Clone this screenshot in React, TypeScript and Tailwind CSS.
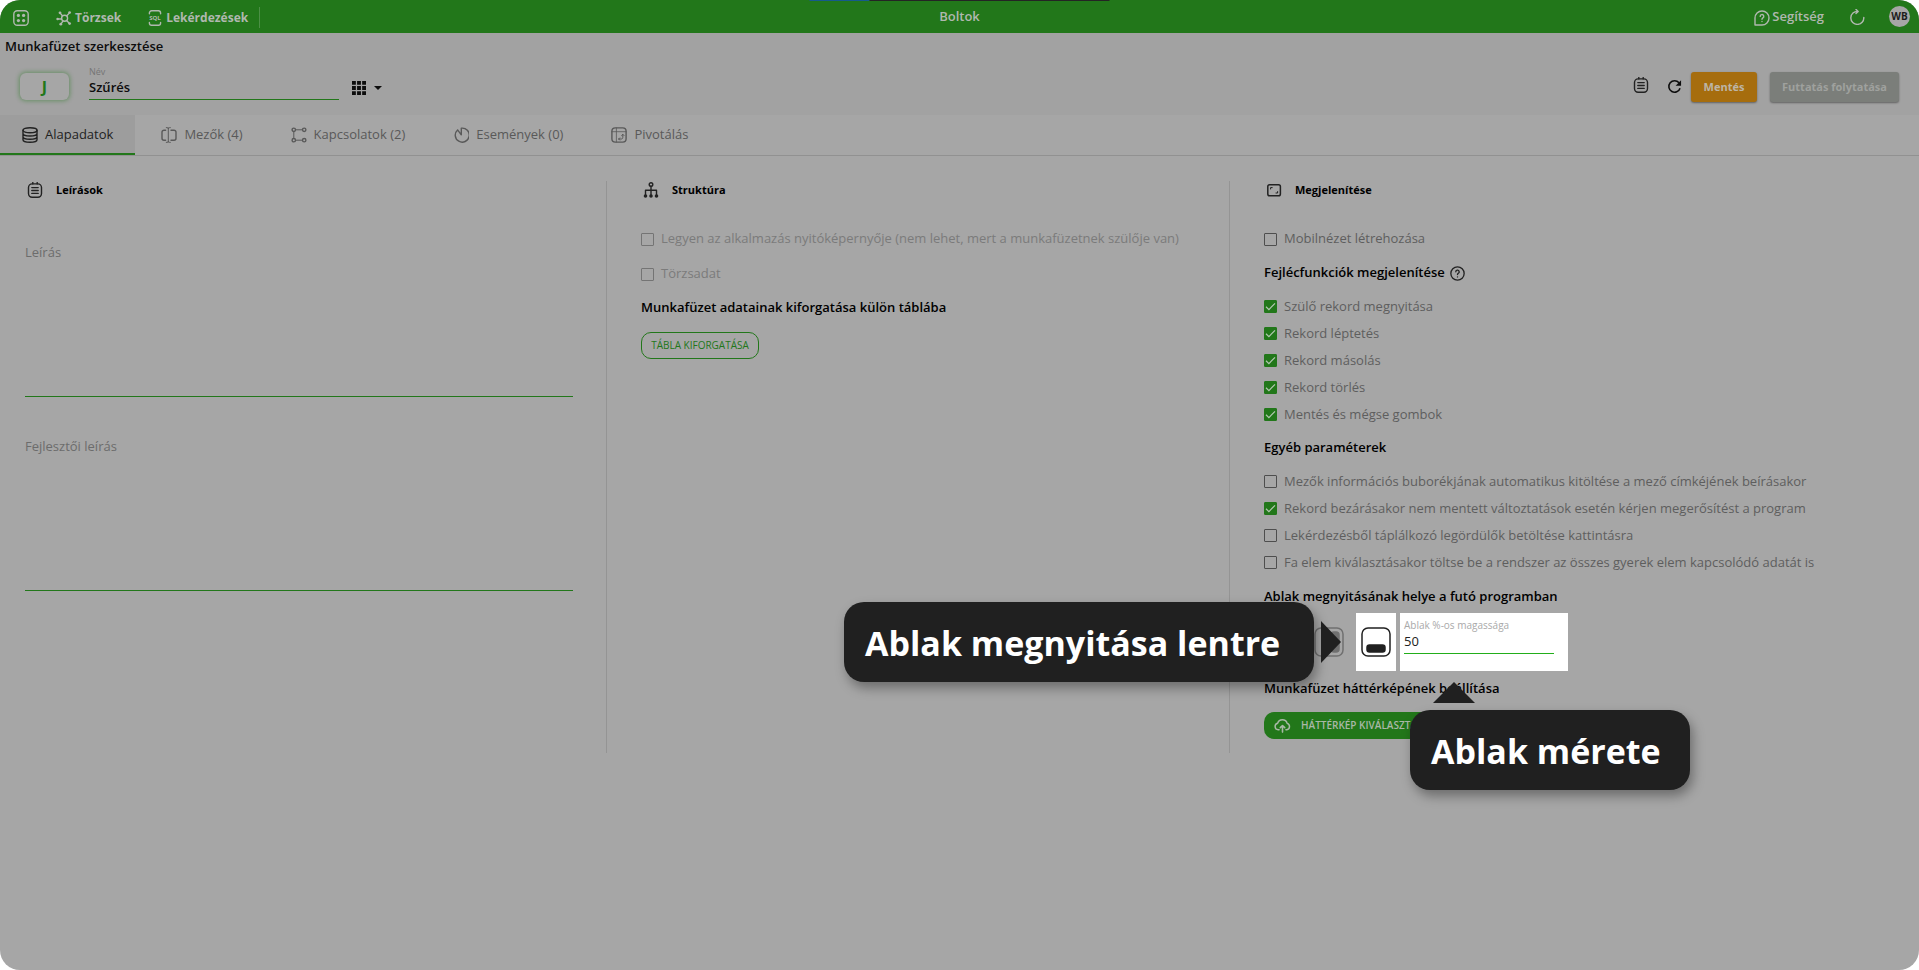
import { useState } from "react";
import type { ReactNode } from "react";

type IconProps = { className?: string };

function Svg({ className = "", children }: { className?: string; children: ReactNode }) {
    return (
        <svg className={`shrink-0 ${className}`} viewBox="0 0 16 16" fill="none" stroke="currentColor"
            strokeWidth={1.4} strokeLinecap="round" strokeLinejoin="round" aria-hidden="true">
            {children}
        </svg>
    );
}

/* ---------- Icons ---------- */

const AppsIcon = ({ className }: IconProps) => (
    <Svg className={className}>
        <rect x="0.8" y="0.8" width="14.4" height="14.4" rx="3.5" />
        <g fill="currentColor" stroke="none">
            <circle cx="5.4" cy="5.4" r="1.6" />
            <circle cx="10.6" cy="5.4" r="1.6" />
            <circle cx="5.4" cy="10.6" r="1.6" />
            <circle cx="10.6" cy="10.6" r="1.6" />
        </g>
    </Svg>
);

const HubIcon = ({ className }: IconProps) => (
    <Svg className={className}>
        <circle cx="8.6" cy="8.2" r="3" />
        <path d="M6.4 5.8 4.6 3.6M10.8 5.8l2-2.2M5.6 9H2.2M10.6 10.6l2.4 2.4M7 11l-1.6 2.4" />
        <g fill="currentColor" stroke="none">
            <circle cx="4" cy="2.8" r="1.4" />
            <circle cx="13.6" cy="2.6" r="1.4" />
            <circle cx="1.6" cy="9" r="1.3" />
            <circle cx="13.6" cy="13.6" r="1.4" />
            <circle cx="4.8" cy="14.2" r="1.4" />
        </g>
    </Svg>
);

const SqlIcon = ({ className }: IconProps) => (
    <Svg className={className}>
        <path d="M2.4 3.8V3a2.2 2.2 0 0 1 2.2-2.2h6.8A2.2 2.2 0 0 1 13.6 3v.8M2.4 12.4v.6a2.2 2.2 0 0 0 2.2 2.2h6.8a2.2 2.2 0 0 0 2.2-2.2v-.6" />
        <text x="8" y="10.4" textAnchor="middle" fontSize="6" fontWeight="700" fill="currentColor" stroke="none">SQL</text>
    </Svg>
);

const HelpBubbleIcon = ({ className }: IconProps) => (
    <Svg className={className}>
        <path d="M1 15V8a7 7 0 1 1 7 7H1Z" />
        <path d="M6.2 6.4a1.8 1.8 0 1 1 2.7 1.5c-.6.4-.9.7-.9 1.4M8 11.5v.1" />
    </Svg>
);

const HelpIcon = ({ className }: IconProps) => (
    <Svg className={className}>
        <circle cx="8" cy="8" r="7.1" />
        <path d="M6.2 6.2a1.8 1.8 0 1 1 2.7 1.5c-.6.4-.9.7-.9 1.4M8 11.5v.1" />
    </Svg>
);

const ReloadIcon = ({ className }: IconProps) => (
    <Svg className={className}>
        <path d="M8.8 2.4a6.5 6.5 0 1 0 6 6M7 .4l2.2 2L7 4.6" />
    </Svg>
);

const RefreshIcon = ({ className }: IconProps) => (
    <Svg className={className}>
        <path strokeWidth={1.7} strokeLinecap="butt" d="M12.8 4.1A6.1 6.1 0 1 0 13.9 9.8" />
        <path fill="currentColor" stroke="none" d="M15 1.4v5.8H9.2z" />
    </Svg>
);

const NotesIcon = ({ className }: IconProps) => (
    <Svg className={className}>
        <rect x="1.5" y="1.9" width="13" height="13.3" rx="3.6" />
        <path d="M5.8.5v1.4M10.2.5v1.4M4.8 5.6h6.4M4.8 8.5h6.4M4.8 11.4h6.4" />
    </Svg>
);

const GridIcon = ({ className }: IconProps) => (
    <Svg className={className}>
        <path fill="currentColor" stroke="none"
            d="M0 0h4.4v4.4H0zM5.8 0h4.4v4.4H5.800zM11.6 0H16v4.4h-4.400zM0 5.800h4.400v4.400H0zM5.800 5.800h4.400v4.400H5.800zM11.600 5.800H16v4.400h-4.400zM0 11.600h4.400V16H0zM5.800 11.600h4.400V16H5.800zM11.600 11.600H16V16h-4.400z" />
    </Svg>
);

const DatabaseIcon = ({ className }: IconProps) => (
    <Svg className={className}>
        <ellipse cx="8" cy="3.3" rx="7" ry="2.5" />
        <path d="M1 3.3v9.4c0 1.4 3.1 2.5 7 2.5s7-1.1 7-2.5V3.3M1 6.5C1 7.9 4.1 9 8 9s7-1.1 7-2.5M1 9.7c0 1.4 3.1 2.5 7 2.5s7-1.1 7-2.5" />
    </Svg>
);

const FieldIcon = ({ className }: IconProps) => (
    <Svg className={className}>
        <path d="M4.6 3.2H3a2 2 0 0 0-2 2v6a2 2 0 0 0 2 2h1.6M10 3.2h3a2 2 0 0 1 2 2v6a2 2 0 0 1-2 2h-3" />
        <path strokeWidth={1} d="M7.3 1v14M5.3.6c1.2 0 2 .2 2 .9 0-.7.8-.9 2-.9M5.3 15.4c1.2 0 2-.2 2-.9 0 .7.8.9 2 .9" />
    </Svg>
);

const LinksIcon = ({ className }: IconProps) => (
    <Svg className={className}>
        <circle cx="2.8" cy="2.8" r="1.7" />
        <circle cx="13.2" cy="2.8" r="1.7" />
        <circle cx="2.8" cy="13.2" r="1.7" />
        <circle cx="13.2" cy="13.2" r="1.7" />
        <path strokeWidth={1} d="M4.8 2.8h6.4M2.8 4.8v6.4M4.8 13.2h6.4" />
    </Svg>
);

const EventIcon = ({ className }: IconProps) => (
    <Svg className={className}>
        <path d="M8.3 1.2v6.6L4.6 2.9A7 7 0 1 0 8.3 1.2Z" />
    </Svg>
);

const PivotIcon = ({ className }: IconProps) => (
    <Svg className={className}>
        <rect x="0.9" y="0.9" width="14.2" height="14.2" rx="3.4" />
        <path strokeWidth={0.8} d="M1 4.7h14M5.4 1v14" />
        <path strokeWidth={1} d="M7.6 12h2.6c1 0 1.6-.6 1.6-1.600V7.4M10.6 8.5l1.2-1.200L13 8.5M8.7 10.9 7.6 12l1.1 1.1" />
    </Svg>
);

const TreeIcon = ({ className }: IconProps) => (
    <Svg className={className}>
        <circle cx="8" cy="2.5" r="1.8" />
        <path d="M8 4.3V14M2.5 13V8.3h11V13" />
        <g fill="currentColor" stroke="none">
            <circle cx="2.5" cy="14" r="1.8" />
            <circle cx="8" cy="14" r="1.8" />
            <circle cx="13.5" cy="14" r="1.8" />
        </g>
    </Svg>
);

const ScreenIcon = ({ className }: IconProps) => (
    <Svg className={className}>
        <rect x="1.8" y="2.8" width="12.6" height="11" rx="1.8" strokeWidth={1.5} />
        <path strokeWidth={1} d="M4.6 7V5.6h1.600M11.6 9.6V11H10" />
    </Svg>
);

const CloudUploadIcon = ({ className }: IconProps) => (
    <Svg className={className}>
        <path strokeWidth={1.4} d="M4.8 12H3.9a3.1 3.1 0 0 1-.5-6.1A4.7 4.7 0 0 1 12.4 6a3.1 3.1 0 0 1-.3 6h-.9" />
        <path strokeWidth={1.5} d="M8 14.2V8.2M5.9 10 8 8l2.1 2" />
    </Svg>
);

/* ---------- Form parts ---------- */

type CheckProps = { label: string; checked?: boolean; disabled?: boolean; className?: string };

function Check({ label, checked = false, disabled = false, className = "h-5" }: CheckProps) {
    const tone = disabled ? "text-[#7b7b7b]" : "text-[#5e5e5e]";
    return (
        <label className={`flex items-center gap-[7px] text-[13px] whitespace-nowrap ${tone} ${className}`}>
            <span className="grid size-[13px] shrink-0">
                <input type="checkbox" defaultChecked={checked} disabled={disabled}
                    className="peer col-start-1 row-start-1 size-[13px] appearance-none rounded-[1px] border border-[#4e4e4e] checked:border-[#22771a] checked:bg-[#22771a] disabled:border-[#747474]" />
                <svg viewBox="0 0 13 13" fill="none" stroke="#b4c8b2" strokeWidth={1.2}
                    className="pointer-events-none invisible col-start-1 row-start-1 size-[13px] peer-checked:visible" aria-hidden="true">
                    <path d="M2 6.8 4.9 9.6 11 3.3" />
                </svg>
            </span>
            {label}
        </label>
    );
}

function ColumnTitle({ icon, children }: { icon: ReactNode; children: ReactNode }) {
    return (
        <h2 className="flex h-[18px] items-center gap-[13px] pl-[2px] text-[11px] font-bold text-black">
            {icon}
            {children}
        </h2>
    );
}

function SubTitle({ className, children }: { className: string; children: ReactNode }) {
    return (
        <h3 className={`flex h-5 items-center gap-[5px] text-[13px] font-semibold whitespace-nowrap text-black ${className}`}>
            {children}
        </h3>
    );
}

function Description({ id, label, className }: { id: string; label: string; className: string }) {
    return (
        <div className={className}>
            <label htmlFor={id} className="block text-[13px] leading-5 text-[#6c6c6c]">{label}</label>
            <textarea id={id} className="block h-[135px] w-full resize-none border-b border-[#22771a] bg-transparent text-[13px] outline-none" />
        </div>
    );
}

const tabs = [
    { name: "Alapadatok", icon: DatabaseIcon },
    { name: "Mezők (4)", icon: FieldIcon },
    { name: "Kapcsolatok (2)", icon: LinksIcon },
    { name: "Események (0)", icon: EventIcon },
    { name: "Pivotálás", icon: PivotIcon },
];

const headerFunctions = [
    "Szülő rekord megnyitása",
    "Rekord léptetés",
    "Rekord másolás",
    "Rekord törlés",
    "Mentés és mégse gombok",
];

const otherParams = [
    { label: "Mezők információs buborékjának automatikus kitöltése a mező címkéjének beírásakor", checked: false },
    { label: "Rekord bezárásakor nem mentett változtatások esetén kérjen megerősítést a program", checked: true },
    { label: "Lekérdezésből táplálkozó legördülők betöltése kattintásra", checked: false },
    { label: "Fa elem kiválasztásakor töltse be a rendszer az összes gyerek elem kapcsolódó adatát is", checked: false },
];

/* ---------- Sections ---------- */

function TopBar() {
    return (
        <header className="relative grid h-[33px] grid-cols-3 items-center bg-[#22771a] text-[13px] font-semibold text-[#b0b8af]">
            {/* Browser loading strip */}
            <div className="absolute top-0 left-1/2 flex h-px w-[301px] -translate-x-1/2">
                <span className="w-1/5 bg-[#165a8c]"></span>
                <span className="w-4/5 bg-[#242424]"></span>
            </div>

            <nav className="flex items-center pt-[2px] pl-[13px] text-xs font-bold whitespace-nowrap">
                <a href="#" aria-label="Alkalmazások"><AppsIcon className="size-4" /></a>
                <a href="#" className="ml-[27px] flex items-center gap-[3px]">
                    <HubIcon className="size-4" />
                    Törzsek
                </a>
                <a href="#" className="ml-[26px] flex items-center gap-[3px]">
                    <SqlIcon className="size-4" />
                    Lekérdezések
                </a>
                <span className="ml-[11px] h-[21px] w-px bg-[#4c8f46]"></span>
            </nav>

            <div className="text-center">Boltok</div>

            <div className="flex items-center justify-end pr-[9px]">
                <a href="#" className="flex items-center gap-[2px]">
                    <HelpBubbleIcon className="mt-[2px] size-4" />
                    Segítség
                </a>
                <button type="button" aria-label="Újratöltés" className="ml-[25px]"><ReloadIcon className="size-4" /></button>
                <button type="button" className="ml-6 size-[21px] rounded-full bg-[#a6a6a6] text-[10px] font-bold text-[#1c1c1c]">WB</button>
            </div>
        </header>
    );
}

function TitleBar() {
    return (
        <section className="bg-[#a2a2a2] pt-[3px] pb-[13px] text-[#0d0d0d]">
            <h1 className="pl-[5px] text-[13px] leading-5 font-semibold">Munkafüzet szerkesztése</h1>
            <div className="mt-2 flex h-[38px] items-end justify-between pr-5 pl-5">
                <div className="flex items-end pb-[2px]">
                    <button type="button" className="h-[27px] w-[49px] rounded-md bg-[#a6a6a6] text-base font-bold text-[#22771a] shadow-[0_0_4px_1px_rgba(34,119,26,0.45)]">J</button>
                    <div className="ml-5 w-[250px]">
                        <label htmlFor="name" className="block text-[9px] leading-[14px] text-[#757575]">Név</label>
                        <input id="name" defaultValue="Szűrés"
                            className="block h-[21px] w-full border-b border-[#22771a] bg-transparent pb-[5px] text-[13px] font-semibold outline-none" />
                    </div>
                    <button type="button" aria-label="Nézet" className="mb-[5px] ml-[13px] flex items-center gap-2">
                        <GridIcon className="size-[14px]" />
                        <svg viewBox="0 0 8 4" className="h-1 w-2" fill="currentColor" aria-hidden="true"><path d="M0 0h8L4 4z" /></svg>
                    </button>
                </div>
                <div className="flex items-end">
                    <button type="button" aria-label="Jegyzetek" className="mb-[9px] text-[#222]"><NotesIcon className="size-4" /></button>
                    <button type="button" aria-label="Frissítés" className="mb-2 ml-[18px]"><RefreshIcon className="size-[15px]" /></button>
                    <button type="button" className="ml-[9px] h-[30px] w-[66px] rounded-[3px] bg-[#a66d0e] text-[11px] font-bold text-[#bdb5a6] shadow-[0_1px_2px_rgba(0,0,0,0.4)]">Mentés</button>
                    <button type="button" disabled className="ml-[13px] h-[30px] w-[129px] rounded-[3px] bg-[#7b7e7a] text-[11px] font-bold text-[#9fa19e] shadow-[0_1px_2px_rgba(0,0,0,0.4)]">Futtatás folytatása</button>
                </div>
            </div>
        </section>
    );
}

function Callout({ className, children }: { className: string; children: ReactNode }) {
    return (
        <div className={`flex h-20 items-center rounded-[20px] bg-[#202020] pt-[2px] pl-[21px] text-[34px] font-bold whitespace-nowrap text-white shadow-[3px_6px_12px_rgba(0,0,0,0.35)] ${className}`}>
            {children}
        </div>
    );
}

function WindowPosition() {
    return (
        <div className="relative mt-[6px] flex h-[58px] items-center">
            <button type="button" aria-label="Megnyitás jobbra" className="ml-[50px] pr-3 text-[#707070]">
                <svg viewBox="0 0 30 30" className="size-[30px]" fill="none" stroke="currentColor" strokeWidth={1.5} aria-hidden="true">
                    <rect x="1" y="1" width="28" height="28" rx="6" />
                    <rect x="17" y="5" width="8" height="20" rx="3" fill="currentColor" />
                </svg>
            </button>
            <button type="button" aria-label="Megnyitás lentre" className="flex h-full w-10 items-center justify-center bg-white text-[#202020]">
                <svg viewBox="0 0 30 30" className="size-[30px]" fill="none" stroke="currentColor" strokeWidth={1.5} aria-hidden="true">
                    <rect x="1" y="1" width="28" height="28" rx="6" />
                    <rect x="6" y="18" width="18" height="7" rx="2.5" fill="currentColor" />
                </svg>
            </button>
            <div className="ml-1 h-full w-[168px] bg-white pt-[5px] pl-1">
                <label htmlFor="height" className="block text-[10px] leading-[14px] text-[#a9a9a9]">Ablak %-os magassága</label>
                <input id="height" defaultValue="50"
                    className="block h-[22px] w-[150px] border-b border-[#22ae1a] bg-transparent pb-1 text-[13px] text-[#222] outline-none" />
            </div>

            {/* Left callout, points at the bottom position button */}
            <div className="absolute top-[-11px] right-[calc(100%-77px)] z-10 flex items-center gap-[7px]">
                <Callout className="w-[470px]">Ablak megnyitása lentre</Callout>
                <svg viewBox="0 0 20 42" className="h-[42px] w-5" fill="#202020" aria-hidden="true"><path d="M0 0v42l20-21z" /></svg>
            </div>

            {/* Bottom callout, points at the height field */}
            <div className="absolute top-[69px] left-[146px] z-10 flex flex-col items-start gap-[7px]">
                <svg viewBox="0 0 42 21" className="ml-[23px] h-[21px] w-[42px]" fill="#202020" aria-hidden="true"><path d="M21 0 42 21H0z" /></svg>
                <Callout className="w-[280px]">Ablak mérete</Callout>
            </div>
        </div>
    );
}

export default function App() {
    const [active, setActive] = useState("Alapadatok");

    return (
        <div className="min-h-screen bg-white font-['Open_Sans','Noto_Sans',sans-serif]">
            <div className="min-h-screen overflow-hidden rounded-[20px] bg-[#a6a6a6]">
                <TopBar />
                <TitleBar />

                {/* Tabs */}
                <nav className="flex h-[41px] border-b border-[#919191]">
                    {tabs.map(({ name, icon: Icon }) => (
                        <button key={name} type="button" onClick={() => setActive(name)}
                            className={`flex h-10 items-center gap-[7px] border-b-2 pt-[2px] pr-[22px] text-[13px] whitespace-nowrap ${
                                active === name
                                    ? "border-[#22771a] bg-[#9d9d9d] pl-[22px] text-[#222]"
                                    : "border-transparent pl-[26px] text-[#595959]"
                            }`}>
                            <Icon className="size-4" />
                            {name}
                        </button>
                    ))}
                </nav>

                <main className="grid grid-cols-[607fr_623fr_689fr] pt-[25px]">
                    {/* Descriptions */}
                    <section className="border-r border-[#949494] pr-[33px] pl-[25px]">
                        <ColumnTitle icon={<NotesIcon className="size-4 text-[#222]" />}>Leírások</ColumnTitle>
                        <Description id="description" label="Leírás" className="mt-[43px]" />
                        <Description id="dev-description" label="Fejlesztői leírás" className="mt-[39px]" />
                    </section>

                    {/* Structure */}
                    <section className="border-r border-[#949494] pl-[34px]">
                        <ColumnTitle icon={<TreeIcon className="size-4 text-[#222]" />}>Struktúra</ColumnTitle>
                        <Check className="mt-[30px] h-5" disabled label="Legyen az alkalmazás nyitóképernyője (nem lehet, mert a munkafüzetnek szülője van)" />
                        <Check className="mt-[15px] h-5" disabled label="Törzsadat" />
                        <SubTitle className="mt-[14px]">Munkafüzet adatainak kiforgatása külön táblába</SubTitle>
                        <button type="button" className="mt-[14px] h-[27px] w-[118px] rounded-[10px] border border-[#22771a] text-[10px] text-[#22771a]">TÁBLA KIFORGATÁSA</button>
                    </section>

                    {/* Appearance */}
                    <section className="pb-[14px] pl-[34px]">
                        <ColumnTitle icon={<ScreenIcon className="size-4 text-[#222]" />}>Megjelenítése</ColumnTitle>
                        <Check className="mt-[30px] h-5" label="Mobilnézet létrehozása" />

                        <SubTitle className="mt-[14px]">
                            Fejlécfunkciók megjelenítése
                            <HelpIcon className="size-[15px] text-[#222]" />
                        </SubTitle>
                        <div className="mt-[10px]">
                            {headerFunctions.map((label) => (
                                <Check key={label} label={label} checked className="h-[27px]" />
                            ))}
                        </div>

                        <SubTitle className="mt-[10px]">Egyéb paraméterek</SubTitle>
                        <div className="mt-[10px]">
                            {otherParams.map((param) => (
                                <Check key={param.label} label={param.label} checked={param.checked} className="h-[27px]" />
                            ))}
                        </div>

                        <SubTitle className="mt-[11px]">Ablak megnyitásának helye a futó programban</SubTitle>
                        <WindowPosition />

                        <SubTitle className="mt-2">Munkafüzet háttérképének beállítása</SubTitle>
                        <button type="button" className="mt-[13px] flex h-[27px] items-center gap-[10px] rounded-[10px] bg-[#22771a] px-[10px] text-[10px] font-semibold whitespace-nowrap text-[#a9b8a7]">
                            <CloudUploadIcon className="size-[17px]" />
                            HÁTTÉRKÉP KIVÁLASZTÁSA
                        </button>
                    </section>
                </main>
            </div>
        </div>
    );
}
